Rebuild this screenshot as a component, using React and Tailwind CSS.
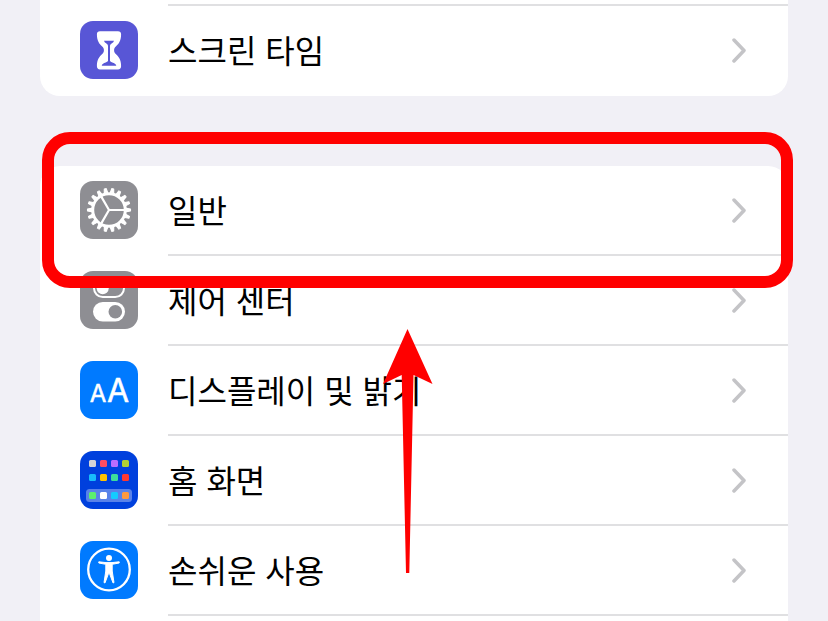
const GEAR_TEETH = Array.from({ length: 18 }, (_, i) => i * 20);

const APP_DOTS = [
  ["#d4d4d6", "#ff4d63", "#b96dff", "#b0cf35"],
  ["#18bdfb", "#ffc300", "#3ddc9b", "#ff3830"],
  ["#5cf06e", "#ffffff", "#14cbff", "#ff9a40"],
];
const DOT_X = [9, 20, 31, 42];
const DOT_Y = [9, 23, 41];

function Tile({ className, children }) {
  return (
    <span className={`block size-[58px] shrink-0 overflow-hidden rounded-[13px] ${className}`}>
      <svg viewBox="0 0 58 58" className="block size-full" aria-hidden="true">
        {children}
      </svg>
    </span>
  );
}

function HourglassIcon() {
  return (
    <Tile className="bg-[#5856d6]">
      <path
        fill="#fff"
        d="M20 10.2h18c2 0 3.1 1.2 3.1 3 0 7-2.6 9.8-5.3 12.3-1.2 1.2-1.7 2-1.7 3.7s.5 2.6 1.7 3.8c2.7 2.5 5.3 5.3 5.3 12.3 0 1.9-1.1 3.1-3.1 3.1H20c-2 0-3.1-1.2-3.1-3.1 0-7 2.6-9.8 5.3-12.3 1.2-1.2 1.7-2.1 1.7-3.8s-.5-2.5-1.7-3.7c-2.7-2.5-5.3-5.3-5.3-12.3 0-1.8 1.1-3 3.1-3z"
      />
      <path
        fill="#5856d6"
        d="M24 19.8h10c-.2 1.2-1.500 2.200-2.700 3-.9.7-1.300 1.300-1.300 2.700v14c0 1 .8 1.300 2.300 1.900 2 .8 3.600 1.300 4 3.300H21.700c.4-2 2-2.500 4-3.300 1.500-.6 2.300-.9 2.300-1.900V25.500c0-1.400-.4-2-1.300-2.700-1.200-.8-2.500-1.800-2.700-3z"
      />
    </Tile>
  );
}

function GearIcon() {
  return (
    <Tile className="bg-[#8e8e93]">
      <g stroke="#fff" fill="none">
        <circle cx="29" cy="29" r="16.3" strokeWidth="3" />
        {GEAR_TEETH.map((a) => (
          <path
            key={a}
            d="M46.5 27.3L50.5 28V30L46.5 30.7z"
            fill="#fff"
            strokeWidth="1.1"
            strokeLinejoin="round"
            transform={`rotate(${a} 29 29)`}
          />
        ))}
        <path d="M29 29H45M29 29L21 15.1M29 29L21 42.9" strokeWidth="2.2" />
      </g>
    </Tile>
  );
}

function TogglesIcon() {
  return (
    <Tile className="bg-[#8e8e93]">
      <rect x="14" y="8.5" width="30" height="17.5" rx="8.75" fill="none" stroke="#fff" strokeWidth="2" />
      <circle cx="22.7" cy="17.3" r="6" fill="#fff" />
      <rect x="13" y="31" width="32" height="19.5" rx="9.75" fill="#fff" />
      <circle cx="35.3" cy="40.7" r="6.8" fill="#8e8e93" />
    </Tile>
  );
}

function TextSizeIcon() {
  return (
    <Tile className="bg-[#007aff]">
      <g
        fill="#fff"
        stroke="#fff"
        strokeWidth="0.5"
        strokeLinejoin="round"
        className="font-['Inter',sans-serif]"
        textAnchor="middle"
      >
        <text x="18" y="41" fontSize="24">A</text>
        <text x="38" y="41" fontSize="32">A</text>
      </g>
    </Tile>
  );
}

function HomeScreenIcon() {
  return (
    <Tile className="bg-[#0040dd]">
      <rect x="6" y="38" width="46" height="13" rx="3.5" fill="#fff" fillOpacity="0.35" />
      {APP_DOTS.map((row, r) =>
        row.map((color, c) => (
          <rect key={color} x={DOT_X[c]} y={DOT_Y[r]} width="7" height="7" rx="1.5" fill={color} />
        ))
      )}
    </Tile>
  );
}

function AccessibilityIcon() {
  return (
    <Tile className="bg-[#007aff]">
      <circle cx="29" cy="28.5" r="20.8" fill="none" stroke="#fff" strokeWidth="2.3" />
      <circle cx="29" cy="17" r="3" fill="#fff" />
      <path
        fill="#fff"
        stroke="#fff"
        strokeWidth="1"
        strokeLinejoin="round"
        d="M18.8 20.8L26 21.6h6L39.2 20.8V22L32.2 23.3V30L34 41.6 33 41.9 29.5 32.5h-1L25 41.9 24 41.6 25.8 30V23.3L18.8 22z"
      />
    </Tile>
  );
}

function Chevron() {
  return (
    <svg viewBox="0 0 16 26" className="h-[26px] w-4 shrink-0" aria-hidden="true">
      <path
        d="M3 3L13 13.5L3 24"
        fill="none"
        stroke="#c4c4c7"
        strokeWidth="3.5"
        strokeLinecap="round"
        strokeLinejoin="round"
      />
    </svg>
  );
}

function Row({ Icon, label, last, children }) {
  return (
    <li className="relative">
      <button type="button" className="flex h-[90px] w-full items-stretch pl-10 text-left">
        <span className="mr-[30px] flex items-center border-b-2 border-transparent">
          <Icon />
        </span>
        <span
          className={`flex flex-1 items-center justify-between border-b-2 pr-[41px] ${
            last ? "border-transparent" : "border-[#e0e0e2]"
          }`}
        >
          <span className="pb-0.5 text-[32px] leading-10 whitespace-nowrap">{label}</span>
          <Chevron />
        </span>
      </button>
      {children}
    </li>
  );
}

function HighlightFrame() {
  return (
    <div className="pointer-events-none absolute -top-[34px] -right-[5px] -bottom-8 left-0.5 z-10 rounded-[28px] border-12 border-[#ff0000]" />
  );
}

function Arrow() {
  return (
    <svg viewBox="0 0 50 246" className="pointer-events-none absolute top-[73px] left-[343px] z-20 h-[246px] w-[50px]" aria-hidden="true">
      <path d="M24.5 0L49.5 55L30.5 46L26.3 244H23L18.7 46L0 55z" fill="#ff0000" />
    </svg>
  );
}

export default function App() {
  return (
    <main
      lang="ko"
      className="h-screen overflow-hidden bg-[#f1f0f6] px-10 font-['Noto_Sans_CJK_KR',sans-serif] text-black"
    >
      <section className="rounded-b-[20px] bg-white">
        <div className="h-1.5 pl-32">
          <div className="h-full border-b-2 border-[#e0e0e2]" />
        </div>
        <ul>
          <Row Icon={HourglassIcon} label="스크린 타임" last />
        </ul>
      </section>
      <section className="mt-[70px] h-full rounded-t-[20px] bg-white">
        <ul>
          <Row Icon={GearIcon} label="일반">
            <HighlightFrame />
          </Row>
          <Row Icon={TogglesIcon} label="제어 센터">
            <Arrow />
          </Row>
          <Row Icon={TextSizeIcon} label="디스플레이 및 밝기" />
          <Row Icon={HomeScreenIcon} label="홈 화면" />
          <Row Icon={AccessibilityIcon} label="손쉬운 사용" />
        </ul>
      </section>
    </main>
  );
}
